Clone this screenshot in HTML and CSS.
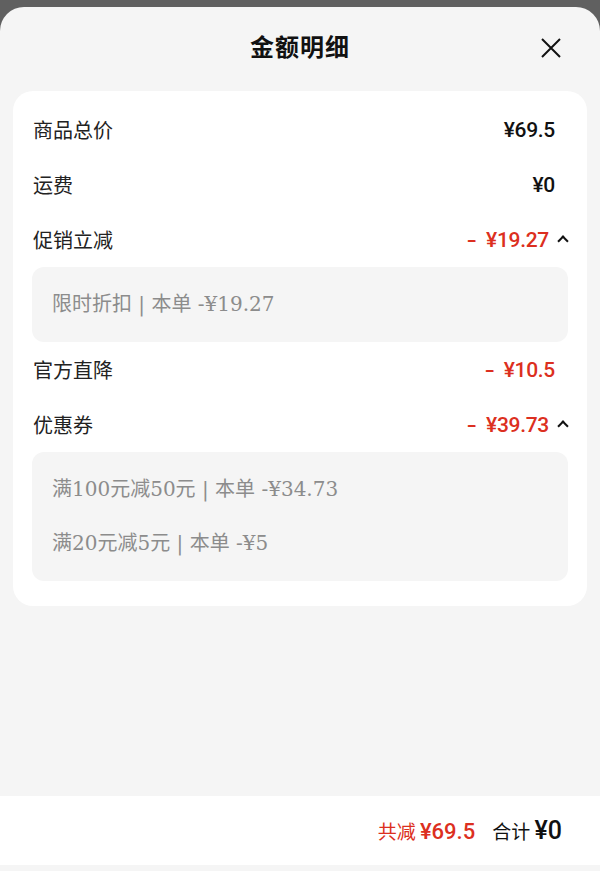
FILE: index.html
```html
<!DOCTYPE html>
<html lang="zh-CN">
<head>
    <meta charset="UTF-8">
    <title>金额明细</title>
    <link rel="stylesheet" href="styles.css">
</head>
<body>
<div class="sheet">
    <header class="sheet-head">
        <h1>金额明细</h1>
        <button class="close" aria-label="关闭">
            <svg width="22" height="22" viewBox="0 0 22 22"><path d="M2 2 L20 20 M20 2 L2 20" stroke="#111" stroke-width="2" fill="none"/></svg>
        </button>
    </header>

    <div class="card">
        <div class="row">
            <span class="label">商品总价</span>
            <span class="value">¥69.5</span>
        </div>
        <div class="row">
            <span class="label">运费</span>
            <span class="value">¥0</span>
        </div>
        <div class="row has-toggle">
            <span class="label">促销立减</span>
            <span class="value minus"><i>-</i>¥19.27</span>
            <span class="chevron"></span>
        </div>
        <div class="detail">
            <p>限时折扣 | 本单 -¥19.27</p>
        </div>
        <div class="row">
            <span class="label">官方直降</span>
            <span class="value minus"><i>-</i>¥10.5</span>
        </div>
        <div class="row has-toggle">
            <span class="label">优惠券</span>
            <span class="value minus"><i>-</i>¥39.73</span>
            <span class="chevron"></span>
        </div>
        <div class="detail">
            <p>满100元减50元 | 本单 -¥34.73</p>
            <p>满20元减5元 | 本单 -¥5</p>
        </div>
    </div>

    <div class="grow"></div>

    <footer class="summary">
        <span class="saved">共减 <b>¥69.5</b></span>
        <span class="total">合计 <b>¥0</b></span>
    </footer>
</div>
</body>
</html>
```

FILE: styles.css
```css
:root {
    --sheet: #f5f5f5;
    --red: #dc2f20;
    --fg: #111111;
    --muted: #8c8c8c;
}
* { box-sizing: border-box; }
html, body { height: 100%; }
body {
    margin: 0;
    padding-top: 7px;
    background: #606060;
    font-family: "Liberation Serif", "Noto Sans CJK SC", serif;
    color: var(--fg);
}
.sheet {
    height: 864px;
    display: flex;
    flex-direction: column;
    background: var(--sheet);
    border-radius: 24px 24px 0 0;
    padding-bottom: 6px;
}
.sheet-head {
    height: 84px;
    display: flex;
    align-items: center;
    justify-content: center;
    position: relative;
    padding-bottom: 8px;
}
.sheet-head h1 {
    margin: 0;
    font-size: 24px;
    font-weight: bold;
    font-family: "Noto Sans CJK SC", sans-serif;
    letter-spacing: 1px;
}
.close {
    position: absolute;
    right: 38px;
    top: 30px;
    background: none;
    border: none;
    padding: 0;
    width: 22px;
    height: 22px;
    cursor: pointer;
}
.close svg { display: block; }
.card {
    margin: 0 13px;
    background: #ffffff;
    border-radius: 20px;
    padding: 11px 19px 25px;
}
.row {
    height: 55px;
    display: flex;
    align-items: center;
    padding-left: 1px;
    padding-right: 13px;
}
.row.has-toggle { padding-right: 0; }
.label {
    flex: 1;
    font-size: 20px;
    font-family: "Noto Sans CJK SC", sans-serif;
    color: #222;
}
.value {
    font-family: Roboto, "Noto Sans CJK SC", sans-serif;
    font-weight: 500;
    font-size: 21px;
    letter-spacing: -0.3px;
}
.value i {
    font-style: normal;
    display: inline-block;
    margin-right: 11px;
    transform: scaleX(1.4);
}
.value.minus { color: var(--red); }
.chevron {
    width: 19px;
    height: 12px;
    display: flex;
    justify-content: center;
}
.chevron::before {
    content: "";
    width: 6px;
    height: 6px;
    margin-top: 3px;
    margin-left: 8px;
    border-left: 2px solid #111;
    border-top: 2px solid #111;
    transform: rotate(45deg);
}
.detail {
    background: var(--sheet);
    border-radius: 12px;
    padding: 10px 20px 11px;
}
.detail p {
    margin: 0;
    height: 54px;
    line-height: 54px;
    font-family: "DejaVu Serif", "Noto Sans CJK SC", serif;
    font-size: 20px;
    color: var(--muted);
    white-space: pre;
}
.grow { flex: 1; }
.summary {
    height: 69px;
    background: #ffffff;
    display: flex;
    align-items: center;
    justify-content: flex-end;
    gap: 17px;
    padding-right: 38px;
    font-family: "Noto Sans CJK SC", sans-serif;
    font-size: 19px;
}
.summary b {
    font-family: Roboto, sans-serif;
    font-weight: 500;
}
.saved { color: var(--red); }
.saved b { font-size: 22px; }
.total b { font-size: 25px; }
```
